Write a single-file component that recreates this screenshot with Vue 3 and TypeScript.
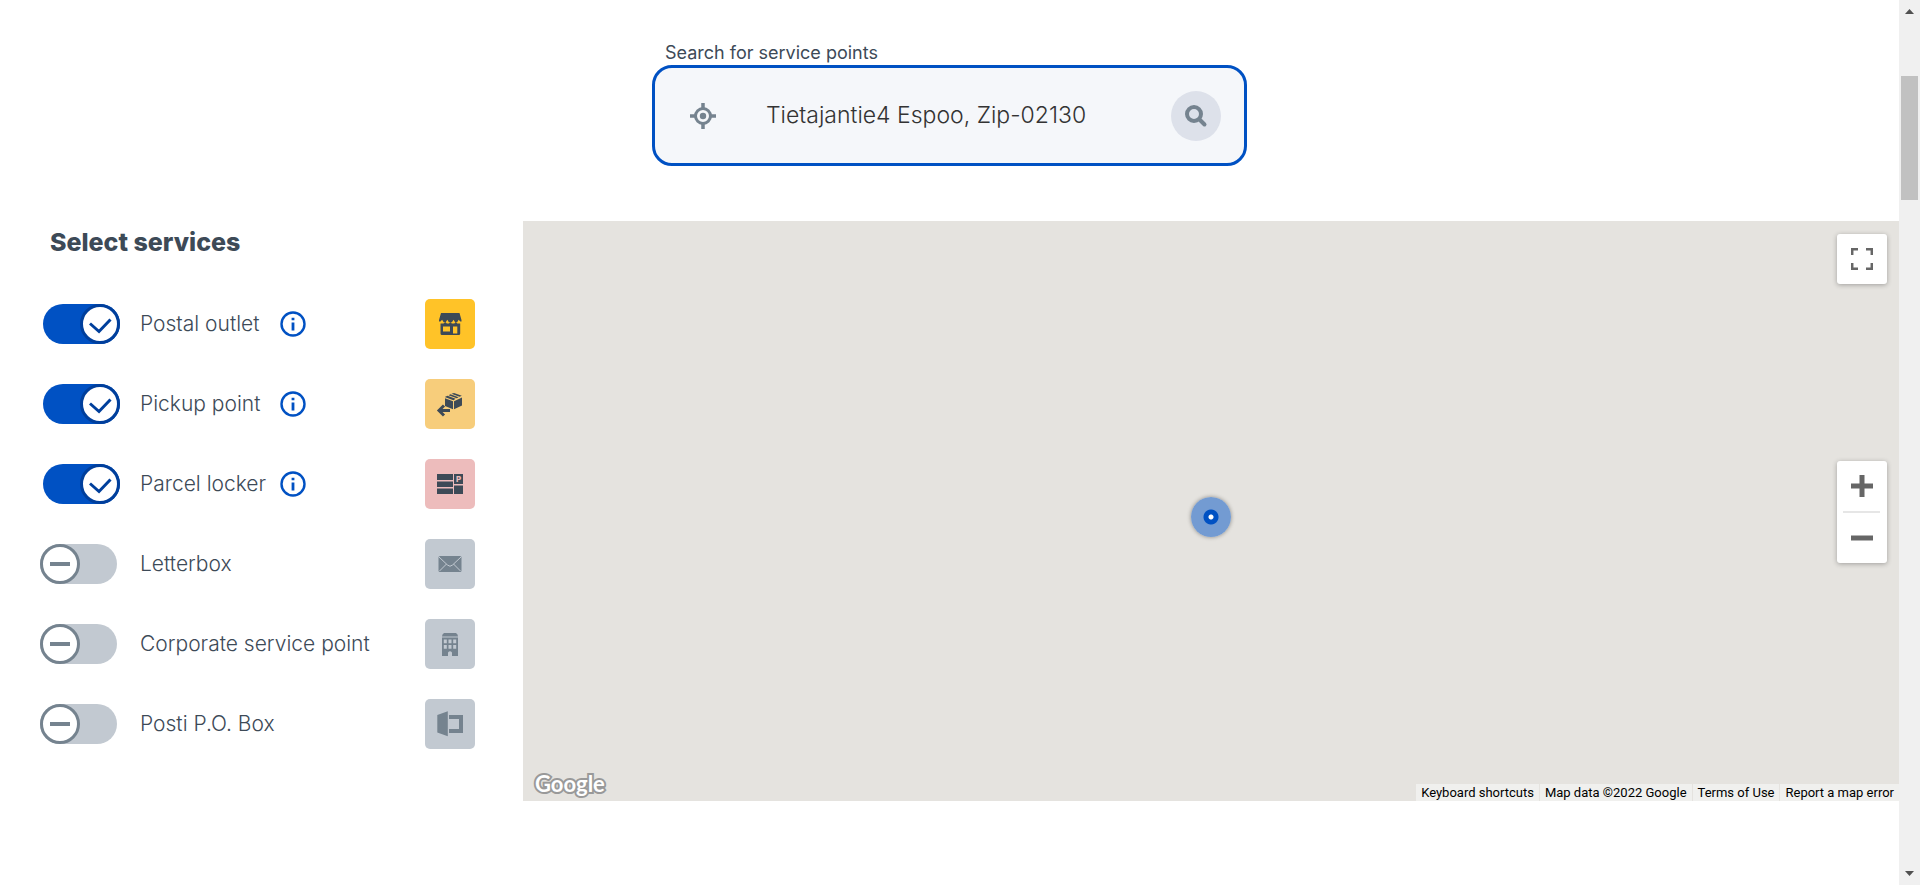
<script setup lang="ts">
import { ref } from 'vue'

interface Service {
  id: string
  name: string
  info: boolean
  enabled: boolean
}

const address = ref('Tietajantie4 Espoo, Zip-02130')

const services = ref<Service[]>([
  { id: 'outlet', name: 'Postal outlet', info: true, enabled: true },
  { id: 'pickup', name: 'Pickup point', info: true, enabled: true },
  { id: 'locker', name: 'Parcel locker', info: true, enabled: true },
  { id: 'letterbox', name: 'Letterbox', info: false, enabled: false },
  { id: 'corporate', name: 'Corporate service point', info: false, enabled: false },
  { id: 'pobox', name: 'Posti P.O. Box', info: false, enabled: false },
])
</script>

<template>
  <div class="page">
    <main class="content">
      <form class="search" @submit.prevent>
        <label class="search-label" for="address">Search for service points</label>
        <div class="search-box">
          <button class="locate" type="button" aria-label="Use my location">
            <svg width="26" height="26" viewBox="0 0 26 26" fill="none" stroke="#75838f">
              <circle cx="13" cy="13" r="7.5" stroke-width="3" />
              <path d="M13 0v6M13 20v6M0 13h6M20 13h6" stroke-width="3.5" />
              <circle cx="13" cy="13" r="3.2" fill="#75838f" stroke="none" />
            </svg>
          </button>
          <input id="address" v-model="address" class="search-input" type="text" />
          <button class="search-button" type="submit" aria-label="Search">
            <svg width="24" height="24" viewBox="0 0 24 24" fill="none" stroke="#75838f">
              <circle cx="10" cy="10" r="7" stroke-width="4" />
              <path d="M15.5 15.5l5 5" stroke-width="4" stroke-linecap="round" />
            </svg>
          </button>
        </div>
      </form>

      <div class="finder">
        <section class="services">
          <h2>Select services</h2>
          <ul>
            <li v-for="service in services" :key="service.id">
              <span class="switch">
                <input :id="service.id" v-model="service.enabled" type="checkbox" />
                <svg class="knob" :class="{ on: service.enabled }" width="40" height="40" viewBox="0 0 40 40">
                  <circle cx="20" cy="20" r="18.5" />
                  <path v-if="service.enabled" d="M10 19.500l9 8 11.500-12" />
                  <path v-else d="M10 20h20" />
                </svg>
              </span>
              <label :for="service.id">{{ service.name }}</label>
              <button v-if="service.info" class="info" type="button" :aria-label="'About ' + service.name">
                <svg width="26" height="26" viewBox="0 0 26 26">
                  <circle cx="13" cy="13" r="11.5" fill="none" stroke="#0051c3" stroke-width="2.4" />
                  <path d="M11.6 6.7h2.8v2.5h-2.8zM11.6 11.5h2.8v8h-2.8z" fill="#0051c3" />
                </svg>
              </button>
              <svg class="tile" :class="service.id" width="50" height="50" viewBox="0 0 50 50" aria-hidden="true">
                <g v-if="service.id === 'outlet'">
                  <path d="M16 14h18.500l2 7v1.500h-1.200l-1.600-1.800-1.600 2.500h-2l-1.600-2.500-1.600 2.500h-3l-1.600-2.500-1.600 2.500h-2l-1.600-2.500-1.600 1.800H14V21z" />
                  <path fill-rule="evenodd" d="M15.500 24.500h3l1.700-1.500 1.700 1.500h2.100l1.400-1.500 1.400 1.500h2.500l1.500-1.500 1.500 1.500h2.900V34.500q0 1.500-1.500 1.500H17q-1.500 0-1.500-1.500zM18 27.500v5h7v-5zM28 27.500v7h4.300v-7z" />
                </g>
                <g v-else-if="service.id === 'pickup'">
                  <path d="M20 19.300l8 3v7.900l-8-3.200zM29 22.300l8-3.700v7.800l-8 3.800zM19.800 18l2.600-1.200 8.200 2.900-2.200 1.500zM23.600 16.200l1.800-.9 8.200 2.900-1.800 1zM26.500 14.800l2.500-.9 7.800 2.900-2.200 1z" />
                  <path d="M25 31.500H14M19 26.500l-5 5 5 5" class="line" />
                </g>
                <g v-else-if="service.id === 'locker'">
                  <path d="M12 15h16v6H12zM12 22.500h16v5.500H12zM12 29.500h16V35H12zM29 15h9v10h-9zM29 26.500h9V35h-9z" />
                  <text x="31" y="23" class="mark">P</text>
                </g>
                <g v-else-if="service.id === 'letterbox'">
                  <path d="M15 17h20q1.500 0 1.500 1.500v13q0 1.500-1.500 1.500H15q-1.500 0-1.500-1.500v-13q0-1.500 1.500-1.500z" />
                  <path d="M14 18l8.500 8q2.500 2.500 5 0l8.500-8M14.500 32l7-7M35.500 32l-7-7" class="crease" />
                </g>
                <g v-else-if="service.id === 'corporate'">
                  <path d="M19 14h12q2 1 2 3.500H17q0-2.500 2-3.500z" />
                  <path fill-rule="evenodd" d="M17 18.500h16V37h-6v-3.500q-2-2.500-4 0V37h-6zM18.800 20.500v3.700h3v-3.700zM23.500 20.500v3.700h3v-3.700zM28.200 20.500v3.700h3v-3.700zM18.800 26v3.700h3V26zM23.500 26v3.700h3V26zM28.200 26v3.700h3V26z" />
                </g>
                <g v-else>
                  <path d="M12.300 16l10.500-3.700v25L12.300 33.500zM24 16h14v18H24v-4h10V20H24z" />
                </g>
              </svg>
            </li>
          </ul>
        </section>

        <section class="map" aria-label="Map">
          <button class="control fullscreen" type="button" aria-label="Toggle fullscreen view">
            <svg width="22" height="22" viewBox="0 0 22 22" fill="none" stroke="#666" stroke-width="2.500">
              <path d="M1.200 7V1.200H7M15 1.200h5.800V7M20.800 15v5.800H15M7 20.800H1.200V15" />
            </svg>
          </button>
          <div class="control zoom">
            <button type="button" aria-label="Zoom in">
              <svg width="22" height="22" viewBox="0 0 22 22" fill="none" stroke="#666" stroke-width="5">
                <path d="M0 11h22M11 0v22" />
              </svg>
            </button>
            <hr />
            <button type="button" aria-label="Zoom out">
              <svg width="22" height="22" viewBox="0 0 22 22" fill="none" stroke="#666" stroke-width="5">
                <path d="M0 11h22" />
              </svg>
            </button>
          </div>
          <span class="marker"></span>
          <footer class="map-footer">
            <a class="logo" href="#">Google</a>
            <div class="legal">
              <button type="button">Keyboard shortcuts</button>
              <span>Map data ©2022 Google</span>
              <a href="#">Terms of Use</a>
              <a href="#">Report a map error</a>
            </div>
          </footer>
        </section>
      </div>
    </main>

    <div class="scrollbar" aria-hidden="true">
      <svg width="9" height="5" viewBox="0 0 9 5"><path d="M0 5l4.500-5L9 5z" /></svg>
      <span class="thumb"></span>
      <svg width="9" height="5" viewBox="0 0 9 5"><path d="M0 0l4.500 5L9 0z" /></svg>
    </div>
  </div>
</template>

<style>
body {
  margin: 0;
  background: #fff;
}
</style>

<style scoped>
.page {
  display: flex;
  min-height: 100vh;
  color: #3d4a57;
  font-family: Inter, "Liberation Sans", sans-serif;
}

button {
  display: flex;
  align-items: center;
  justify-content: center;
  padding: 0;
  border: 0;
  background: none;
  color: inherit;
  font: inherit;
  cursor: pointer;
}

.content {
  flex: 1;
  min-width: 0;
}

.search {
  box-sizing: border-box;
  width: 595px;
  max-width: 100%;
  margin: 0 auto;
  padding-top: 41px;
}

.search-label {
  display: block;
  padding-left: 13px;
  font-size: 18px;
  font-weight: 400;
  line-height: 24px;
}

.search-box {
  display: flex;
  align-items: center;
  box-sizing: border-box;
  height: 101px;
  padding: 0 23px;
  border: 3px solid #0051c3;
  border-radius: 20px;
  background: #f5f7fa;
}

.locate {
  width: 50px;
  height: 50px;
}

.search-input {
  flex: 1;
  min-width: 0;
  height: 50px;
  padding: 0 38px 2px;
  border: 0;
  outline: 0;
  background: none;
  color: #333;
  font-family: inherit;
  font-size: 23px;
  font-weight: 300;
}

.search-button {
  width: 50px;
  height: 50px;
  border-radius: 50%;
  background: #dde1ea;
}

.finder {
  display: grid;
  grid-template-columns: 523px 1fr;
  margin-top: 55px;
}

.services {
  padding: 0 48px 0 40px;
}

h2 {
  margin: 0;
  padding: 9px 0 45px 10px;
  font-size: 25px;
  font-weight: 800;
  line-height: 24px;
}

ul {
  display: grid;
  gap: 30px;
  margin: 0;
  padding: 0;
  list-style: none;
}

li {
  display: flex;
  align-items: center;
  height: 50px;
}

.switch {
  display: grid;
  width: 80px;
  margin-right: 20px;
}

.switch input {
  grid-area: 1 / 1;
  width: 77px;
  height: 40px;
  margin: 0;
  border-radius: 20px;
  appearance: none;
  background: #c2c9d1;
  cursor: pointer;
}

.switch input:checked {
  justify-self: end;
  background: #0051c3;
}

.knob {
  grid-area: 1 / 1;
  fill: #fff;
  stroke: #75838f;
  stroke-width: 3;
  pointer-events: none;
}

.knob path {
  fill: none;
  stroke-width: 4;
}

.knob.on {
  justify-self: end;
  stroke: #003f9c;
}

.knob.on path {
  stroke-width: 3;
}

li label {
  min-width: 126px;
  font-size: 21px;
  font-weight: 300;
  line-height: 24px;
}

.info {
  width: 26px;
  height: 26px;
  margin-left: 14px;
}

.tile {
  margin-left: auto;
  border-radius: 5px;
  background: #c2c9d1;
  fill: #75838f;
}

.tile.outlet {
  background: #ffc328;
  fill: #3d4a57;
}

.tile.pickup {
  background: #f7cd7b;
  fill: #3d4a57;
}

.tile.locker {
  background: #edbcbc;
  fill: #3d4a57;
}

.line {
  fill: none;
  stroke: #3d4a57;
  stroke-width: 3;
}

.crease {
  fill: none;
  stroke: #c2c9d1;
  stroke-width: 1;
}

.mark {
  fill: #edbcbc;
  font-size: 8px;
  font-weight: 800;
}

.map {
  position: relative;
  display: flex;
  height: 580px;
  background: #e5e3df;
}

.control {
  position: absolute;
  right: 12px;
  width: 50px;
  border-radius: 3px;
  background: #fff;
  box-shadow: 0 1px 5px rgba(0, 0, 0, 0.3);
}

.fullscreen {
  top: 13px;
  height: 50px;
}

.zoom {
  top: 240px;
}

.zoom button {
  width: 50px;
  height: 50px;
}

.zoom hr {
  height: 2px;
  margin: 0 7px 0 6px;
  border: 0;
  background: #e6e6e6;
}

.marker {
  position: absolute;
  top: calc(50% - 14px);
  left: calc(50% - 20px);
  width: 40px;
  height: 40px;
  border-radius: 50%;
  background: radial-gradient(circle, #fff 2px, #0051c3 3px, #0051c3 7px, #739bd2 8px);
  box-shadow: 0 0 4px rgba(0, 0, 0, 0.4);
}

.map-footer {
  display: flex;
  flex: 1;
  align-items: flex-end;
  justify-content: space-between;
}

.logo {
  padding: 0 12px 3px;
  color: #fff;
  font-family: Lato, "Liberation Sans", sans-serif;
  font-size: 22px;
  font-weight: 700;
  line-height: 28px;
  text-decoration: none;
  paint-order: stroke fill;
  -webkit-text-stroke: 4px #999;
}

.legal {
  display: flex;
  gap: 1px;
  color: #000;
  font-family: Roboto, "Liberation Sans", sans-serif;
  font-size: 13px;
  line-height: 17px;
}

.legal > * {
  padding: 0 5px;
  background: #f0f0ee;
  color: #000;
  text-decoration: none;
}

.scrollbar {
  position: sticky;
  top: 0;
  display: grid;
  grid-template-rows: 5px 62fr 124fr 671fr 5px;
  justify-items: center;
  box-sizing: border-box;
  width: 21px;
  height: 100vh;
  padding: 9px 2px;
  background: #f0f0f0;
  fill: #505050;
}

.thumb {
  grid-row: 3;
  width: 17px;
  background: #c1c1c1;
}

.scrollbar svg:last-child {
  grid-row: 5;
}
</style>
